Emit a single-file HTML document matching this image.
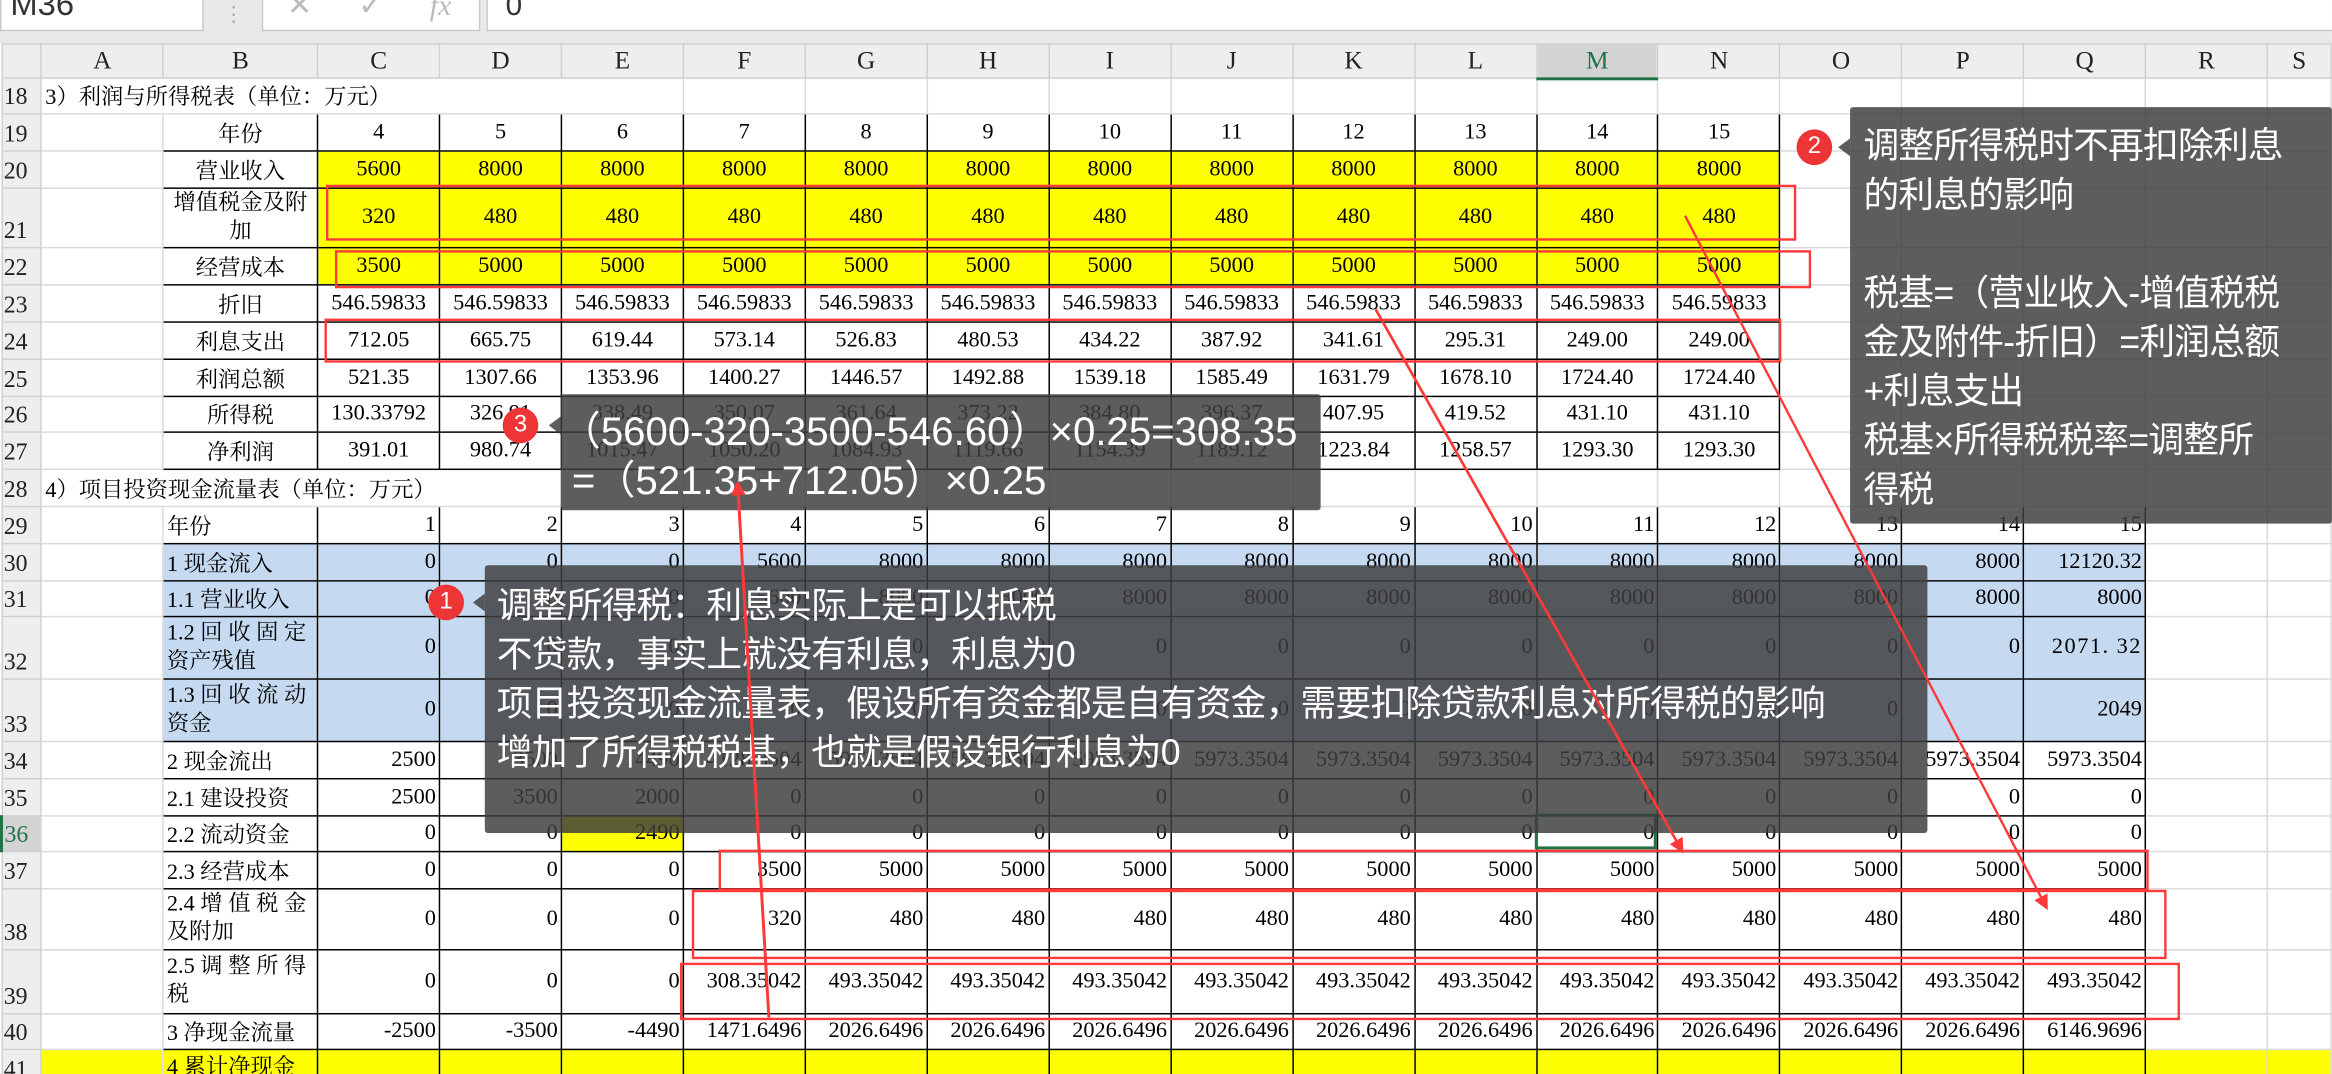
<!DOCTYPE html>
<html><head><meta charset="utf-8">
<style>
html,body{margin:0;padding:0;background:#fff;overflow:hidden;width:2332px;height:1074px}
#w{position:absolute;left:0;top:0;width:1568px;height:722px;transform:scale(1.4872,1.4875);transform-origin:0 0;overflow:hidden;background:#fff;font-family:"Liberation Serif","Noto Serif CJK SC",serif}
#top{position:absolute;left:0;top:0;width:1568px;height:29px;background:#e9e9e9}
.fb{position:absolute;top:0;height:20px;background:#fff;border:1px solid #c8c8c8;border-top:none;font-family:"Liberation Sans",sans-serif;color:#333;overflow:hidden}
table{border-collapse:collapse;table-layout:fixed;position:absolute;left:0;top:29px}
td,th{border:0.7px solid #dadada;padding:0 2px;overflow:hidden;white-space:nowrap;font-size:15px;font-weight:normal;color:#000;vertical-align:middle}
th{background:#eeeeee;color:#222;font-size:16px}
th.rh{text-align:left;vertical-align:bottom;padding:0 0 1px 1px;border-color:#cfcfcf}
tr.ch th{text-align:center;border-color:#cfcfcf;font-size:17px}
.k{border:1.4px solid #000}
.y{background:#ffff00}
.bl{background:#c5d9f1}
tr.t1 td{text-align:center}
tr.t2 td{text-align:right}
tr.t2 td.l,td.l{text-align:left}
.box{position:absolute;background:rgba(62,62,62,0.84);color:#fff;font-family:"Liberation Sans","Noto Sans CJK SC",sans-serif;font-size:24px;letter-spacing:-0.5px;line-height:33px;white-space:nowrap;border-radius:2px;overflow:hidden}
.ptr{position:absolute;width:0;height:0;border-right:8px solid rgba(62,62,62,0.84);border-top:6px solid transparent;border-bottom:6px solid transparent}
.cir{position:absolute;width:24px;height:24px;border-radius:50%;background:#ee3535;color:#fff;font-family:"Liberation Sans",sans-serif;font-size:16px;line-height:24px;text-align:center}
</style></head><body>
<div id="w">
<div id="top">
 <div class="fb" style="left:0;width:129px;font-size:22px;line-height:6px;padding-left:6px">M36</div>
 <div style="position:absolute;left:150px;top:2px;color:#aaa;font-size:14px">⋮</div>
 <div class="fb" style="left:176px;width:145px;color:#bbb;font-size:20px;line-height:8px"><span style="position:absolute;left:16px">✕</span><span style="position:absolute;left:64px">✓</span><span style="position:absolute;left:112px;font-style:italic;font-family:'Liberation Serif',serif">fx</span></div>
 <div class="fb" style="left:327px;width:1245px;font-size:20px;line-height:8px;padding-left:12px">0</div>
</div>
<table>
<colgroup><col style="width:27px"><col style="width:82px"><col style="width:104px"><col style="width:82px"><col style="width:82px"><col style="width:82px"><col style="width:82px"><col style="width:82px"><col style="width:82px"><col style="width:82px"><col style="width:82px"><col style="width:82px"><col style="width:82px"><col style="width:82px"><col style="width:82px"><col style="width:82px"><col style="width:82px"><col style="width:82px"><col style="width:82px"><col style="width:43px"></colgroup>
<tr class="ch" style="height:23px"><th style="background:#eee"></th><th>A</th><th>B</th><th>C</th><th>D</th><th>E</th><th>F</th><th>G</th><th>H</th><th>I</th><th>J</th><th>K</th><th>L</th><th style="background:#d3d3d3;color:#217346;border-bottom:2px solid #217346">M</th><th>N</th><th>O</th><th>P</th><th>Q</th><th>R</th><th>S</th></tr>
<tr style="height:24px"><th class="rh">18</th><td colspan="5" class="l">3）利润与所得税表（单位：万元）</td><td></td><td></td><td></td><td></td><td></td><td></td><td></td><td></td><td></td><td></td><td></td><td></td><td></td><td></td></tr>
<tr class="t1" style="height:25px"><th class="rh">19</th><td></td><td class="k">年份</td><td class="k">4</td><td class="k">5</td><td class="k">6</td><td class="k">7</td><td class="k">8</td><td class="k">9</td><td class="k">10</td><td class="k">11</td><td class="k">12</td><td class="k">13</td><td class="k">14</td><td class="k">15</td><td></td><td></td><td></td><td></td><td></td></tr>
<tr class="t1" style="height:25px"><th class="rh">20</th><td></td><td class="k">营业收入</td><td class="k y">5600</td><td class="k y">8000</td><td class="k y">8000</td><td class="k y">8000</td><td class="k y">8000</td><td class="k y">8000</td><td class="k y">8000</td><td class="k y">8000</td><td class="k y">8000</td><td class="k y">8000</td><td class="k y">8000</td><td class="k y">8000</td><td></td><td></td><td></td><td></td><td></td></tr>
<tr class="t1" style="height:40px"><th class="rh">21</th><td></td><td class="k" style="line-height:19px;white-space:normal">增值税金及附加</td><td class="k y">320</td><td class="k y">480</td><td class="k y">480</td><td class="k y">480</td><td class="k y">480</td><td class="k y">480</td><td class="k y">480</td><td class="k y">480</td><td class="k y">480</td><td class="k y">480</td><td class="k y">480</td><td class="k y">480</td><td></td><td></td><td></td><td></td><td></td></tr>
<tr class="t1" style="height:25px"><th class="rh">22</th><td></td><td class="k">经营成本</td><td class="k y">3500</td><td class="k y">5000</td><td class="k y">5000</td><td class="k y">5000</td><td class="k y">5000</td><td class="k y">5000</td><td class="k y">5000</td><td class="k y">5000</td><td class="k y">5000</td><td class="k y">5000</td><td class="k y">5000</td><td class="k y">5000</td><td></td><td></td><td></td><td></td><td></td></tr>
<tr class="t1" style="height:25px"><th class="rh">23</th><td></td><td class="k">折旧</td><td class="k">546.59833</td><td class="k">546.59833</td><td class="k">546.59833</td><td class="k">546.59833</td><td class="k">546.59833</td><td class="k">546.59833</td><td class="k">546.59833</td><td class="k">546.59833</td><td class="k">546.59833</td><td class="k">546.59833</td><td class="k">546.59833</td><td class="k">546.59833</td><td></td><td></td><td></td><td></td><td></td></tr>
<tr class="t1" style="height:25px"><th class="rh">24</th><td></td><td class="k">利息支出</td><td class="k">712.05</td><td class="k">665.75</td><td class="k">619.44</td><td class="k">573.14</td><td class="k">526.83</td><td class="k">480.53</td><td class="k">434.22</td><td class="k">387.92</td><td class="k">341.61</td><td class="k">295.31</td><td class="k">249.00</td><td class="k">249.00</td><td></td><td></td><td></td><td></td><td></td></tr>
<tr class="t1" style="height:25px"><th class="rh">25</th><td></td><td class="k">利润总额</td><td class="k">521.35</td><td class="k">1307.66</td><td class="k">1353.96</td><td class="k">1400.27</td><td class="k">1446.57</td><td class="k">1492.88</td><td class="k">1539.18</td><td class="k">1585.49</td><td class="k">1631.79</td><td class="k">1678.10</td><td class="k">1724.40</td><td class="k">1724.40</td><td></td><td></td><td></td><td></td><td></td></tr>
<tr class="t1" style="height:24px"><th class="rh">26</th><td></td><td class="k">所得税</td><td class="k">130.33792</td><td class="k">326.91</td><td class="k">338.49</td><td class="k">350.07</td><td class="k">361.64</td><td class="k">373.22</td><td class="k">384.80</td><td class="k">396.37</td><td class="k">407.95</td><td class="k">419.52</td><td class="k">431.10</td><td class="k">431.10</td><td></td><td></td><td></td><td></td><td></td></tr>
<tr class="t1" style="height:25px"><th class="rh">27</th><td></td><td class="k">净利润</td><td class="k">391.01</td><td class="k">980.74</td><td class="k">1015.47</td><td class="k">1050.20</td><td class="k">1084.93</td><td class="k">1119.66</td><td class="k">1154.39</td><td class="k">1189.12</td><td class="k">1223.84</td><td class="k">1258.57</td><td class="k">1293.30</td><td class="k">1293.30</td><td></td><td></td><td></td><td></td><td></td></tr>
<tr style="height:25px"><th class="rh">28</th><td colspan="5" class="l">4）项目投资现金流量表（单位：万元）</td><td></td><td></td><td></td><td></td><td></td><td></td><td></td><td></td><td></td><td></td><td></td><td></td><td></td><td></td></tr>
<tr class="t2" style="height:25px"><th class="rh">29</th><td></td><td class="k l">年份</td><td class="k">1</td><td class="k">2</td><td class="k">3</td><td class="k">4</td><td class="k">5</td><td class="k">6</td><td class="k">7</td><td class="k">8</td><td class="k">9</td><td class="k">10</td><td class="k">11</td><td class="k">12</td><td class="k">13</td><td class="k">14</td><td class="k">15</td><td></td><td></td></tr>
<tr class="t2" style="height:25px"><th class="rh">30</th><td></td><td class="k l bl">1 现金流入</td><td class="k bl">0</td><td class="k bl">0</td><td class="k bl">0</td><td class="k bl">5600</td><td class="k bl">8000</td><td class="k bl">8000</td><td class="k bl">8000</td><td class="k bl">8000</td><td class="k bl">8000</td><td class="k bl">8000</td><td class="k bl">8000</td><td class="k bl">8000</td><td class="k bl">8000</td><td class="k bl">8000</td><td class="k bl">12120.32</td><td></td><td></td></tr>
<tr class="t2" style="height:24px"><th class="rh">31</th><td></td><td class="k l bl">1.1 营业收入</td><td class="k bl">0</td><td class="k bl">0</td><td class="k bl">0</td><td class="k bl">5600</td><td class="k bl">8000</td><td class="k bl">8000</td><td class="k bl">8000</td><td class="k bl">8000</td><td class="k bl">8000</td><td class="k bl">8000</td><td class="k bl">8000</td><td class="k bl">8000</td><td class="k bl">8000</td><td class="k bl">8000</td><td class="k bl">8000</td><td></td><td></td></tr>
<tr class="t2" style="height:42px"><th class="rh">32</th><td></td><td class="k l bl" style="line-height:19px">1.2 回 收 固 定<br>资产残值</td><td class="k bl">0</td><td class="k bl">0</td><td class="k bl">0</td><td class="k bl">0</td><td class="k bl">0</td><td class="k bl">0</td><td class="k bl">0</td><td class="k bl">0</td><td class="k bl">0</td><td class="k bl">0</td><td class="k bl">0</td><td class="k bl">0</td><td class="k bl">0</td><td class="k bl">0</td><td class="k bl" style="letter-spacing:1px">2071. 32</td><td></td><td></td></tr>
<tr class="t2" style="height:42px"><th class="rh">33</th><td></td><td class="k l bl" style="line-height:19px">1.3 回 收 流 动<br>资金</td><td class="k bl">0</td><td class="k bl">0</td><td class="k bl">0</td><td class="k bl">0</td><td class="k bl">0</td><td class="k bl">0</td><td class="k bl">0</td><td class="k bl">0</td><td class="k bl">0</td><td class="k bl">0</td><td class="k bl">0</td><td class="k bl">0</td><td class="k bl">0</td><td class="k bl"></td><td class="k bl">2049</td><td></td><td></td></tr>
<tr class="t2" style="height:25px"><th class="rh">34</th><td></td><td class="k l">2 现金流出</td><td class="k">2500</td><td class="k">3500</td><td class="k">4490</td><td class="k">4128.3504</td><td class="k">5973.3504</td><td class="k">5973.3504</td><td class="k">5973.3504</td><td class="k">5973.3504</td><td class="k">5973.3504</td><td class="k">5973.3504</td><td class="k">5973.3504</td><td class="k">5973.3504</td><td class="k">5973.3504</td><td class="k">5973.3504</td><td class="k">5973.3504</td><td></td><td></td></tr>
<tr class="t2" style="height:25px"><th class="rh">35</th><td></td><td class="k l">2.1 建设投资</td><td class="k">2500</td><td class="k">3500</td><td class="k">2000</td><td class="k">0</td><td class="k">0</td><td class="k">0</td><td class="k">0</td><td class="k">0</td><td class="k">0</td><td class="k">0</td><td class="k">0</td><td class="k">0</td><td class="k">0</td><td class="k">0</td><td class="k">0</td><td></td><td></td></tr>
<tr class="t2" style="height:24px"><th class="rh" style="background:#d3d3d3;color:#217346;border-left:2px solid #217346">36</th><td></td><td class="k l">2.2 流动资金</td><td class="k">0</td><td class="k">0</td><td class="k y">2490</td><td class="k">0</td><td class="k">0</td><td class="k">0</td><td class="k">0</td><td class="k">0</td><td class="k">0</td><td class="k">0</td><td class="k">0</td><td class="k">0</td><td class="k">0</td><td class="k">0</td><td class="k">0</td><td></td><td></td></tr>
<tr class="t2" style="height:25px"><th class="rh">37</th><td></td><td class="k l">2.3 经营成本</td><td class="k">0</td><td class="k">0</td><td class="k">0</td><td class="k">3500</td><td class="k">5000</td><td class="k">5000</td><td class="k">5000</td><td class="k">5000</td><td class="k">5000</td><td class="k">5000</td><td class="k">5000</td><td class="k">5000</td><td class="k">5000</td><td class="k">5000</td><td class="k">5000</td><td></td><td></td></tr>
<tr class="t2" style="height:41px"><th class="rh">38</th><td></td><td class="k l" style="line-height:19px">2.4 增 值 税 金<br>及附加</td><td class="k">0</td><td class="k">0</td><td class="k">0</td><td class="k">320</td><td class="k">480</td><td class="k">480</td><td class="k">480</td><td class="k">480</td><td class="k">480</td><td class="k">480</td><td class="k">480</td><td class="k">480</td><td class="k">480</td><td class="k">480</td><td class="k">480</td><td></td><td></td></tr>
<tr class="t2" style="height:43px"><th class="rh">39</th><td></td><td class="k l" style="line-height:19px">2.5 调 整 所 得<br>税</td><td class="k">0</td><td class="k">0</td><td class="k">0</td><td class="k">308.35042</td><td class="k">493.35042</td><td class="k">493.35042</td><td class="k">493.35042</td><td class="k">493.35042</td><td class="k">493.35042</td><td class="k">493.35042</td><td class="k">493.35042</td><td class="k">493.35042</td><td class="k">493.35042</td><td class="k">493.35042</td><td class="k">493.35042</td><td></td><td></td></tr>
<tr class="t2" style="height:24px"><th class="rh">40</th><td></td><td class="k l">3 净现金流量</td><td class="k">-2500</td><td class="k">-3500</td><td class="k">-4490</td><td class="k">1471.6496</td><td class="k">2026.6496</td><td class="k">2026.6496</td><td class="k">2026.6496</td><td class="k">2026.6496</td><td class="k">2026.6496</td><td class="k">2026.6496</td><td class="k">2026.6496</td><td class="k">2026.6496</td><td class="k">2026.6496</td><td class="k">2026.6496</td><td class="k">6146.9696</td><td></td><td></td></tr>
<tr class="t2" style="height:25px"><th class="rh">41</th><td class="y"></td><td class="k l y" style="vertical-align:top">4 累计净现金</td><td class="k y"></td><td class="k y"></td><td class="k y"></td><td class="k y"></td><td class="k y"></td><td class="k y"></td><td class="k y"></td><td class="k y"></td><td class="k y"></td><td class="k y"></td><td class="k y"></td><td class="k y"></td><td class="k y"></td><td class="k y"></td><td class="k y"></td><td class="y"></td><td class="y"></td></tr>
</table>

<div style="position:absolute;left:1032px;top:547px;width:82px;height:24px;border:2px solid #217346;box-sizing:border-box"></div>

<div class="box" style="left:1244px;top:72px;width:324px;height:280px;padding:10px 0 0 9px;box-sizing:border-box">调整所得税时不再扣除利息<br>的利息的影响<br>&nbsp;<br>税基=（营业收入-增值税税<br>金及附件-折旧）=利润总额<br>+利息支出<br>税基×所得税税率=调整所<br>得税</div>
<div class="ptr" style="left:1236px;top:93px"></div>
<div class="cir" style="left:1208px;top:87px">2</div>

<div class="box" style="left:377px;top:265px;width:511px;height:78px;padding:9px 0 0 0;box-sizing:border-box;font-size:27px;letter-spacing:0;line-height:33px">（5600-320-3500-546.60）×0.25=308.35<br>&nbsp;=（521.35+712.05）×0.25</div>
<div class="ptr" style="left:369px;top:280px"></div>
<div class="cir" style="left:338px;top:274px">3</div>

<div class="box" style="left:326px;top:380px;width:970px;height:180px;padding:11px 0 0 8px;box-sizing:border-box">调整所得税：利息实际上是可以抵税<br>不贷款，事实上就没有利息，利息为0<br>项目投资现金流量表，假设所有资金都是自有资金，需要扣除贷款利息对所得税的影响<br>增加了所得税税基，也就是假设银行利息为0</div>
<div class="ptr" style="left:318px;top:399px"></div>
<div class="cir" style="left:288px;top:393px">1</div>

<svg style="position:absolute;left:0;top:0" width="1568" height="722" viewBox="0 0 1568 722">
<defs><marker id="a" markerWidth="10" markerHeight="10" refX="8" refY="5" orient="auto" markerUnits="userSpaceOnUse"><path d="M0,0 L10,5 L0,10 z" fill="#ff3838"/></marker></defs>
<g fill="none" stroke="#ff3838" stroke-width="1.6">
<rect x="220" y="125" width="987" height="36"/>
<rect x="226" y="169" width="991" height="24"/>
<rect x="219" y="215" width="978" height="28"/>
<rect x="484" y="572" width="960" height="26"/>
<rect x="466" y="599" width="990" height="45"/>
<rect x="458" y="648" width="1007" height="37"/>
<line x1="517" y1="684" x2="496" y2="325" stroke-width="2" marker-end="url(#a)"/>
<line x1="925" y1="208" x2="1131" y2="572" stroke-width="1.8" marker-end="url(#a)"/>
<line x1="1133" y1="145" x2="1376" y2="610" stroke-width="1.6" marker-end="url(#a)"/>
</g>
</svg>
</div>
</body></html>
